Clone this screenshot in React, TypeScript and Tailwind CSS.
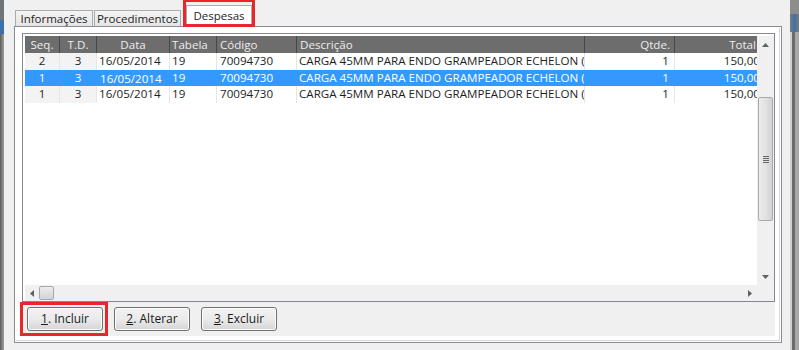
import React from 'react'

const cols = [
  { key: 'seq', label: 'Seq.', w: 35, head: 'text-center', cell: 'text-center' },
  { key: 'td', label: 'T.D.', w: 37, head: 'text-center', cell: 'text-center' },
  { key: 'data', label: 'Data', w: 73, head: 'text-center', cell: 'text-left pl-[2px]' },
  { key: 'tab', label: 'Tabela', w: 47, head: 'text-left pl-[2px]', cell: 'text-left pl-[2px]' },
  { key: 'cod', label: 'Código', w: 80, head: 'text-left pl-[3px]', cell: 'text-left pl-[3px]' },
  { key: 'desc', label: 'Descrição', w: 288, head: 'text-left pl-[3px]', cell: 'text-left pl-[2px]' },
  { key: 'qtd', label: 'Qtde.', w: 90, head: 'text-right pr-[4px]', cell: 'text-right pr-[5px]' },
  { key: 'total', label: 'Total', w: 88, head: 'text-right pr-[6px]', cell: 'text-right pr-[2px]' },
]

const rows = [
  { seq: '2', td: '3', data: '16/05/2014', tab: '19', cod: '70094730', desc: 'CARGA 45MM PARA ENDO GRAMPEADOR ECHELON (', qtd: '1', total: '150,00' },
  { seq: '1', td: '3', data: '16/05/2014', tab: '19', cod: '70094730', desc: 'CARGA 45MM PARA ENDO GRAMPEADOR ECHELON (', qtd: '1', total: '150,00', sel: true },
  { seq: '1', td: '3', data: '16/05/2014', tab: '19', cod: '70094730', desc: 'CARGA 45MM PARA ENDO GRAMPEADOR ECHELON (', qtd: '1', total: '150,00' },
]

function Btn({ n, label }: { n: string; label: string }) {
  return (
    <button className="h-[24px] w-[76px] rounded-[3px] border border-[#707070] bg-gradient-to-b from-[#f2f2f2] via-[#ebebeb] to-[#d6d6d6] text-[12px] text-[#1a1a1a] shadow-[inset_0_0_0_1px_#fcfcfc]">
      <span className="underline">{n}</span>. {label}
    </button>
  )
}

export default function App() {
  return (
    <div
      className="flex h-[350px] w-[799px] overflow-hidden bg-[#f0f0f0] text-[11.6px] text-[#1e1e1e]"
      style={{ fontFamily: '"Open Sans", "Noto Sans", sans-serif' }}
    >
      {/* window frame left */}
      <div className="flex w-[4px] flex-col bg-[#8a8a8a]">
        <div className="h-[20px] bg-[#6f7478]" />
        <div className="h-[14px] bg-[#3d6fa8]" />
        <div className="flex-1 bg-gradient-to-r from-[#5c5c5c] to-[#a0a0a0]" />
      </div>

      <div className="flex flex-1 flex-col pl-[10px] pr-[8px]">
        {/* tabs */}
        <div className="flex h-[27px] items-end pl-[1px]">
          <div className="flex h-[17px] w-[78px] items-center justify-center border border-b-0 border-[#acacac] bg-gradient-to-b from-[#f4f4f4] to-[#e4e4e4] text-[11.5px]">
            Informações
          </div>
          <div className="ml-[1px] flex h-[17px] w-[87px] items-center justify-center border border-b-0 border-[#acacac] bg-gradient-to-b from-[#f4f4f4] to-[#e4e4e4] text-[11.5px]">
            Procedimentos
          </div>
          <div className="relative ml-[2px] flex h-[28px] w-[72px] items-end px-[3px]">
            <div className="absolute inset-0 border-[3px] border-[#e8262c]" />
            <div className="flex h-[22px] w-full items-center justify-center border border-b-0 border-[#acacac] bg-white pb-[2px] text-[11.5px]">
              Despesas
            </div>
          </div>
        </div>

        {/* tab panel */}
        <div className="-mt-[1px] h-[317px] w-[768px] border border-[#898c95] bg-white p-[1px]">
          <div className="h-full w-full border-b border-r border-[#d8d8d8] px-[6px] pt-[5px]">
            {/* grid */}
            <div className="flex h-[269px] w-[753px] flex-col border border-[#828790] bg-white">
              <div className="flex flex-1 overflow-hidden pl-[2px] pt-[2px]">
                <div className="w-[732px] overflow-hidden">
                  <div className="flex h-[17px] w-[740px] bg-[#6d6d6d] text-[#ececec]">
                    {cols.map((c) => (
                      <div
                        key={c.key}
                        className={`h-full shrink-0 border-r border-[#474747] leading-[17px] ${c.head}`}
                        style={{ width: c.w }}
                      >
                        {c.label}
                      </div>
                    ))}
                  </div>
                  {rows.map((r, i) => (
                    <div
                      key={i}
                      className={`flex h-[16.5px] w-[740px] ${r.sel ? 'bg-[#3399ff] text-white' : 'bg-white text-[#1e1e1e]'}`}
                    >
                      {cols.map((c) => (
                        <div
                          key={c.key}
                          className={`h-full shrink-0 overflow-hidden whitespace-nowrap border-r leading-[16px] ${c.cell} ${
                            r.sel ? 'border-[#3399ff]' : 'border-[#e6e6e6]'
                          } ${!r.sel && (c.key === 'seq' || c.key === 'td') ? 'bg-[#f3f3f3]' : ''} ${
                            r.sel && c.key === 'data' ? 'border border-dotted border-[#222]' : ''
                          }`}
                          style={{ width: c.w }}
                        >
                          {(r as any)[c.key]}
                        </div>
                      ))}
                    </div>
                  ))}
                </div>
                {/* vertical scrollbar */}
                <div className="flex w-[17px] flex-col items-center bg-[#f0f0f0]">
                  <div className="flex h-[17px] w-full items-center justify-center">
                    <svg width="7" height="4" viewBox="0 0 7 4"><path d="M0 4 L3.5 0 L7 4 Z" fill="#606060" /></svg>
                  </div>
                  <div className="mt-[44px] flex h-[124px] w-[15px] items-center justify-center rounded-[2px] border border-[#a9a9a9] bg-gradient-to-r from-[#ececec] via-[#e2e2e2] to-[#d2d2d2]">
                    <div className="flex flex-col gap-[1px]">
                      <div className="h-[1px] w-[6px] bg-[#666]" />
                      <div className="h-[1px] w-[6px] bg-[#666]" />
                      <div className="h-[1px] w-[6px] bg-[#666]" />
                      <div className="h-[1px] w-[6px] bg-[#666]" />
                    </div>
                  </div>
                  <div className="flex-1" />
                  <div className="flex h-[17px] w-full items-center justify-center">
                    <svg width="7" height="4" viewBox="0 0 7 4"><path d="M0 0 L3.5 4 L7 0 Z" fill="#606060" /></svg>
                  </div>
                </div>
              </div>
              {/* horizontal scrollbar */}
              <div className="flex h-[16px] pl-[2px]">
                <div className="flex w-[732px] items-center bg-[#f0f0f0]">
                  <div className="flex w-[14px] justify-center">
                    <svg width="4" height="7" viewBox="0 0 4 7"><path d="M4 0 L0 3.5 L4 7 Z" fill="#606060" /></svg>
                  </div>
                  <div className="h-[14px] w-[15px] rounded-[2px] border border-[#a9a9a9] bg-gradient-to-b from-[#ececec] to-[#d4d4d4]" />
                  <div className="flex-1" />
                  <div className="flex w-[14px] justify-center">
                    <svg width="4" height="7" viewBox="0 0 4 7"><path d="M0 0 L4 3.5 L0 7 Z" fill="#606060" /></svg>
                  </div>
                </div>
                <div className="w-[17px] bg-[#f0f0f0]" />
              </div>
            </div>

            {/* buttons */}
            <div className="flex h-[34px] w-[753px] gap-[11px] bg-[#f0f0f0] pl-[5px] pt-[5px]">
              <div className="relative">
                <div className="absolute -left-[7px] -top-[5px] h-[34px] w-[88px] border-[3px] border-[#e8262c]" />
                <Btn n="1" label="Incluir" />
              </div>
              <Btn n="2" label="Alterar" />
              <Btn n="3" label="Excluir" />
            </div>
          </div>
        </div>
      </div>

      {/* window frame right */}
      <div className="flex w-[9px] flex-col">
        <div className="h-[14px] bg-[#8d8d8d]" />
        <div className="h-[18px] bg-gradient-to-r from-[#7a7a7a] via-[#3d6fa8] to-[#7a7a7a]" />
        <div className="flex flex-1 bg-[#9b9b9b]">
          <div className="w-[2px] bg-[#d0d0d0]" />
          <div className="w-[3px] bg-[#6b6b6b]" />
          <div className="w-[4px] bg-[#a8a8a8]" />
        </div>
      </div>
    </div>
  )
}
